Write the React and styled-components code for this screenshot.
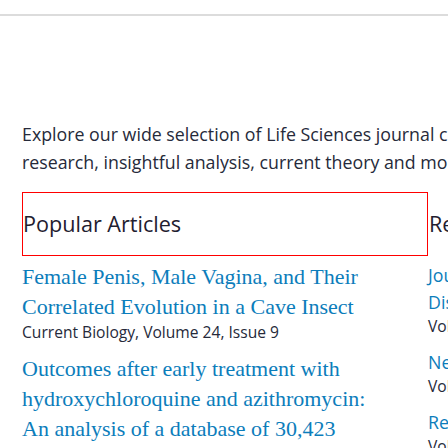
import React from "react";
import styled, { createGlobalStyle } from "styled-components";

const Global = createGlobalStyle`
  html, body { margin: 0; padding: 0; background: #fff; overflow: hidden; }
  body { font-family: "Open Sans", "Noto Sans", sans-serif; color: #2e2e2e; }
`;

const TopBar = styled.header`
  height: 14px;
  border-bottom: 2px solid #dcdcdc;
  background: #fff;
`;

const Main = styled.main`
  width: 900px;
  padding: 104px 0 0 22px;
`;

const Intro = styled.p`
  margin: 0 0 16px;
  width: 800px;
  font-size: 17.8px;
  line-height: 28px;
  color: #262a3a;
`;

const Columns = styled.div`
  display: grid;
  grid-template-columns: 406px 400px;
  align-items: start;
`;

const Column = styled.section`
  display: flex;
  flex-direction: column;
`;

const Heading = styled.h2`
  margin: 0;
  padding: 15px 0 15px ${(p) => (p.$outlined ? "0" : "1px")};
  border: 1px solid ${(p) => (p.$outlined ? "#ff0000" : "transparent")};
  border-left-width: ${(p) => (p.$outlined ? "1px" : "0")};
  font-weight: 400;
  font-size: 21.6px;
  line-height: 32px;
  color: #1f2030;
`;

const List = styled.ul`
  list-style: none;
  margin: 6px 0 0;
  padding: 0 ${(p) => p.$inset}px 0 0;
  display: flex;
  flex-direction: column;
  gap: ${(p) => p.$gap}px;
`;

const Item = styled.li`
  display: flex;
  flex-direction: column;
`;

const Title = styled.a`
  font-family: "Liberation Serif", "Times New Roman", serif;
  font-size: 22px;
  line-height: 30px;
  color: #0c7dbb;
  text-decoration: none;
`;

const SideTitle = styled.a`
  font-size: 17.8px;
  line-height: 27px;
  color: #0c7dbb;
  text-decoration: none;
`;

const Meta = styled.span`
  font-size: 15.6px;
  line-height: 20px;
  color: #262a3a;
`;

const popular = [
  {
    title: "Female Penis, Male Vagina, and Their Correlated Evolution in a Cave Insect",
    meta: "Current Biology, Volume 24, Issue 9",
  },
  {
    title:
      "Outcomes after early treatment with hydroxychloroquine and azithromycin: An analysis of a database of 30,423 COVID-19 patients",
    meta: "New Microbes and New Infections, Volume 38",
  },
];

const recent = [
  {
    title: "Journal of Experimental Botany highlights: Discovery of a new plant hormone pathway",
    meta: "Volume 12, Issue 3",
  },
  { title: "New insights into cell signalling", meta: "Volume 45, Issue 1" },
  { title: "Regulation of gene expression", meta: "Volume 7, Issue 2" },
];

export default function App() {
  return (
    <>
      <Global />
      <TopBar />
      <Main>
        <Intro>
          Explore our wide selection of Life Sciences journal content, featuring groundbreaking original
          research, insightful analysis, current theory and more.
        </Intro>
        <Columns>
          <Column>
            <Heading $outlined>Popular Articles</Heading>
            <List $gap={12} $inset={38}>
              {popular.map((a) => (
                <Item key={a.title}>
                  <Title href="#">{a.title}</Title>
                  <Meta>{a.meta}</Meta>
                </Item>
              ))}
            </List>
          </Column>
          <Column>
            <Heading>Recent Publications</Heading>
            <List $gap={13} $inset={20}>
              {recent.map((a) => (
                <Item key={a.title}>
                  <SideTitle href="#">{a.title}</SideTitle>
                  <Meta>{a.meta}</Meta>
                </Item>
              ))}
            </List>
          </Column>
        </Columns>
      </Main>
    </>
  );
}
